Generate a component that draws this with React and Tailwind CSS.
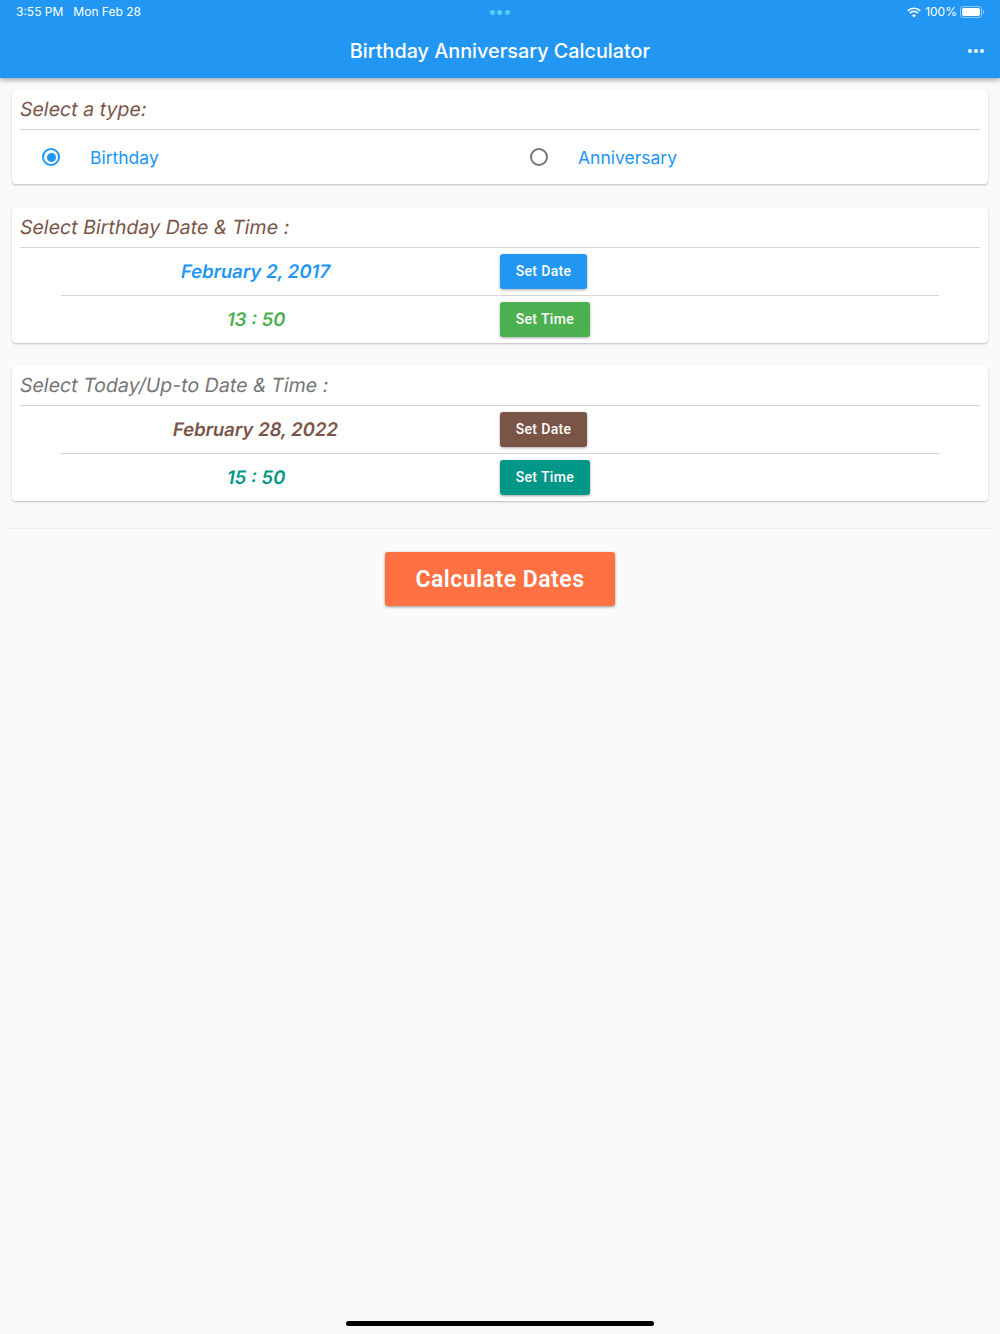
function Slanted({ children }) {
  return <span className="inline-block skew-x-[-10deg]">{children}</span>;
}

function RadioOption({ label, selected }) {
  return (
    <div className="flex items-center pl-[30px]">
      <div
        className={`flex h-[18px] w-[18px] items-center justify-center rounded-full border-2 ${
          selected ? "border-[#2196f3]" : "border-[#757575]"
        }`}
      >
        {selected && <div className="h-[9px] w-[9px] rounded-full bg-[#2196f3]" />}
      </div>
      <span className="ml-[30px] pt-[1px] text-[17.5px] leading-none text-[#2196f3]">{label}</span>
    </div>
  );
}

function PickerRow({ value, textColor, btnColor, btnLabel }) {
  return (
    <div className="grid h-[47px] grid-cols-2 items-center">
      <div className={`text-center text-[18.5px] font-semibold ${textColor}`}>
        <Slanted>{value}</Slanted>
      </div>
      <div className="flex">
        <button
          className={`h-[35px] rounded-[3px] px-[15.7px] font-['Roboto',sans-serif] text-[14px] font-medium tracking-[0.35px] text-white shadow-[0_1px_3px_rgba(0,0,0,0.35)] ${btnColor}`}
        >
          {btnLabel}
        </button>
      </div>
    </div>
  );
}

function Card({ title, titleColor, children, className }) {
  return (
    <section className={`rounded-[4px] bg-white shadow-[0_1px_2px_rgba(0,0,0,0.25)] ${className}`}>
      <h2 className={`mx-2 flex h-[40px] items-center border-b border-[#d6d6d6] text-[19.5px] font-normal tracking-[0.05px] ${titleColor}`}>
        <Slanted>{title}</Slanted>
      </h2>
      {children}
    </section>
  );
}

function DateTimeCard({ title, titleColor, date, time }) {
  return (
    <Card title={title} titleColor={titleColor} className="h-[135px]">
      <PickerRow {...date} btnLabel="Set Date" />
      <div className="mx-[49px] border-t border-[#d6d6d6]" />
      <PickerRow {...time} btnLabel="Set Time" />
    </Card>
  );
}

function Wifi() {
  return (
    <svg width="14" height="11" viewBox="0 0 14 11" fill="none" stroke="white" strokeWidth="1.7">
      <path d="M0.8 3.8C4.2 0.4 9.8 0.4 13.2 3.8" />
      <path d="M3 6.1C5.2 3.9 8.8 3.9 11 6.1" />
      <path d="M7 10.6L4.9 8.3C6 7.2 8 7.2 9.1 8.3Z" fill="white" stroke="none" />
    </svg>
  );
}

function Battery() {
  return (
    <div className="flex items-center">
      <div className="flex h-[12px] w-[22px] items-center rounded-[3.5px] border border-white/50 p-[1px]">
        <div className="h-full w-full rounded-[2px] bg-white" />
      </div>
      <div className="ml-[1px] h-[4px] w-[1px] rounded-r-sm bg-white/50" />
    </div>
  );
}

export default function App() {
  return (
    <div className="flex min-h-[1334px] flex-col bg-[#fafafa] font-['Inter',sans-serif]">
      <header className="h-[78px] bg-[#2196f3] text-white shadow-[0_2px_5px_rgba(0,0,0,0.35)]">
        <div className="grid h-[24px] grid-cols-3 items-center px-4 text-[12px]">
          <div className="flex gap-[10px]">
            <span>3:55 PM</span>
            <span>Mon Feb 28</span>
          </div>
          <div className="flex justify-center gap-[2.5px]">
            <div className="h-[5px] w-[5px] rounded-full bg-[#5ecbf5]" />
            <div className="h-[5px] w-[5px] rounded-full bg-[#5ecbf5]" />
            <div className="h-[5px] w-[5px] rounded-full bg-[#5ecbf5]" />
          </div>
          <div className="flex items-center justify-end gap-[3px]">
            <Wifi />
            <span className="ml-[1px]">100%</span>
            <Battery />
          </div>
        </div>
        <div className="grid h-[54px] grid-cols-[1fr_auto_1fr] items-center px-4">
          <div />
          <h1 className="pt-[1px] text-[19.8px] font-medium">Birthday Anniversary Calculator</h1>
          <div className="flex justify-end gap-[2px]">
            <div className="h-[4px] w-[4px] rounded-full bg-white" />
            <div className="h-[4px] w-[4px] rounded-full bg-white" />
            <div className="h-[4px] w-[4px] rounded-full bg-white" />
          </div>
        </div>
      </header>

      <main className="flex flex-1 flex-col px-3 pt-3">
        <Card title="Select a type:" titleColor="text-[#795548]" className="h-[94px]">
          <div className="grid h-[54px] grid-cols-2 items-center">
            <RadioOption label="Birthday" selected />
            <RadioOption label="Anniversary" />
          </div>
        </Card>

        <div className="mt-6">
          <DateTimeCard
            title="Select Birthday Date & Time :"
            titleColor="text-[#795548]"
            date={{ value: "February 2, 2017", textColor: "text-[#2196f3]", btnColor: "bg-[#2196f3]" }}
            time={{ value: "13 : 50", textColor: "text-[#4caf50]", btnColor: "bg-[#4caf50]" }}
          />
        </div>

        <div className="mt-[23px]">
          <DateTimeCard
            title="Select Today/Up-to Date & Time :"
            titleColor="text-[#757575]"
            date={{ value: "February 28, 2022", textColor: "text-[#795548]", btnColor: "bg-[#795548]" }}
            time={{ value: "15 : 50", textColor: "text-[#009688]", btnColor: "bg-[#009688]" }}
          />
        </div>

        <div className="-mx-1 mt-[27px] border-t border-[#eeeeee]" />

        <div className="mt-[23px] flex justify-center">
          <button className="h-[54px] w-[230px] rounded-[3px] bg-[#ff7043] pt-[3px] font-['Roboto',sans-serif] text-[23px] font-semibold tracking-[0.5px] text-white shadow-[0_1px_3px_rgba(0,0,0,0.4)]">
            Calculate Dates
          </button>
        </div>

        <div className="mt-auto flex justify-center pb-2">
          <div className="h-[5px] w-[308px] rounded-full bg-black" />
        </div>
      </main>
    </div>
  );
}
